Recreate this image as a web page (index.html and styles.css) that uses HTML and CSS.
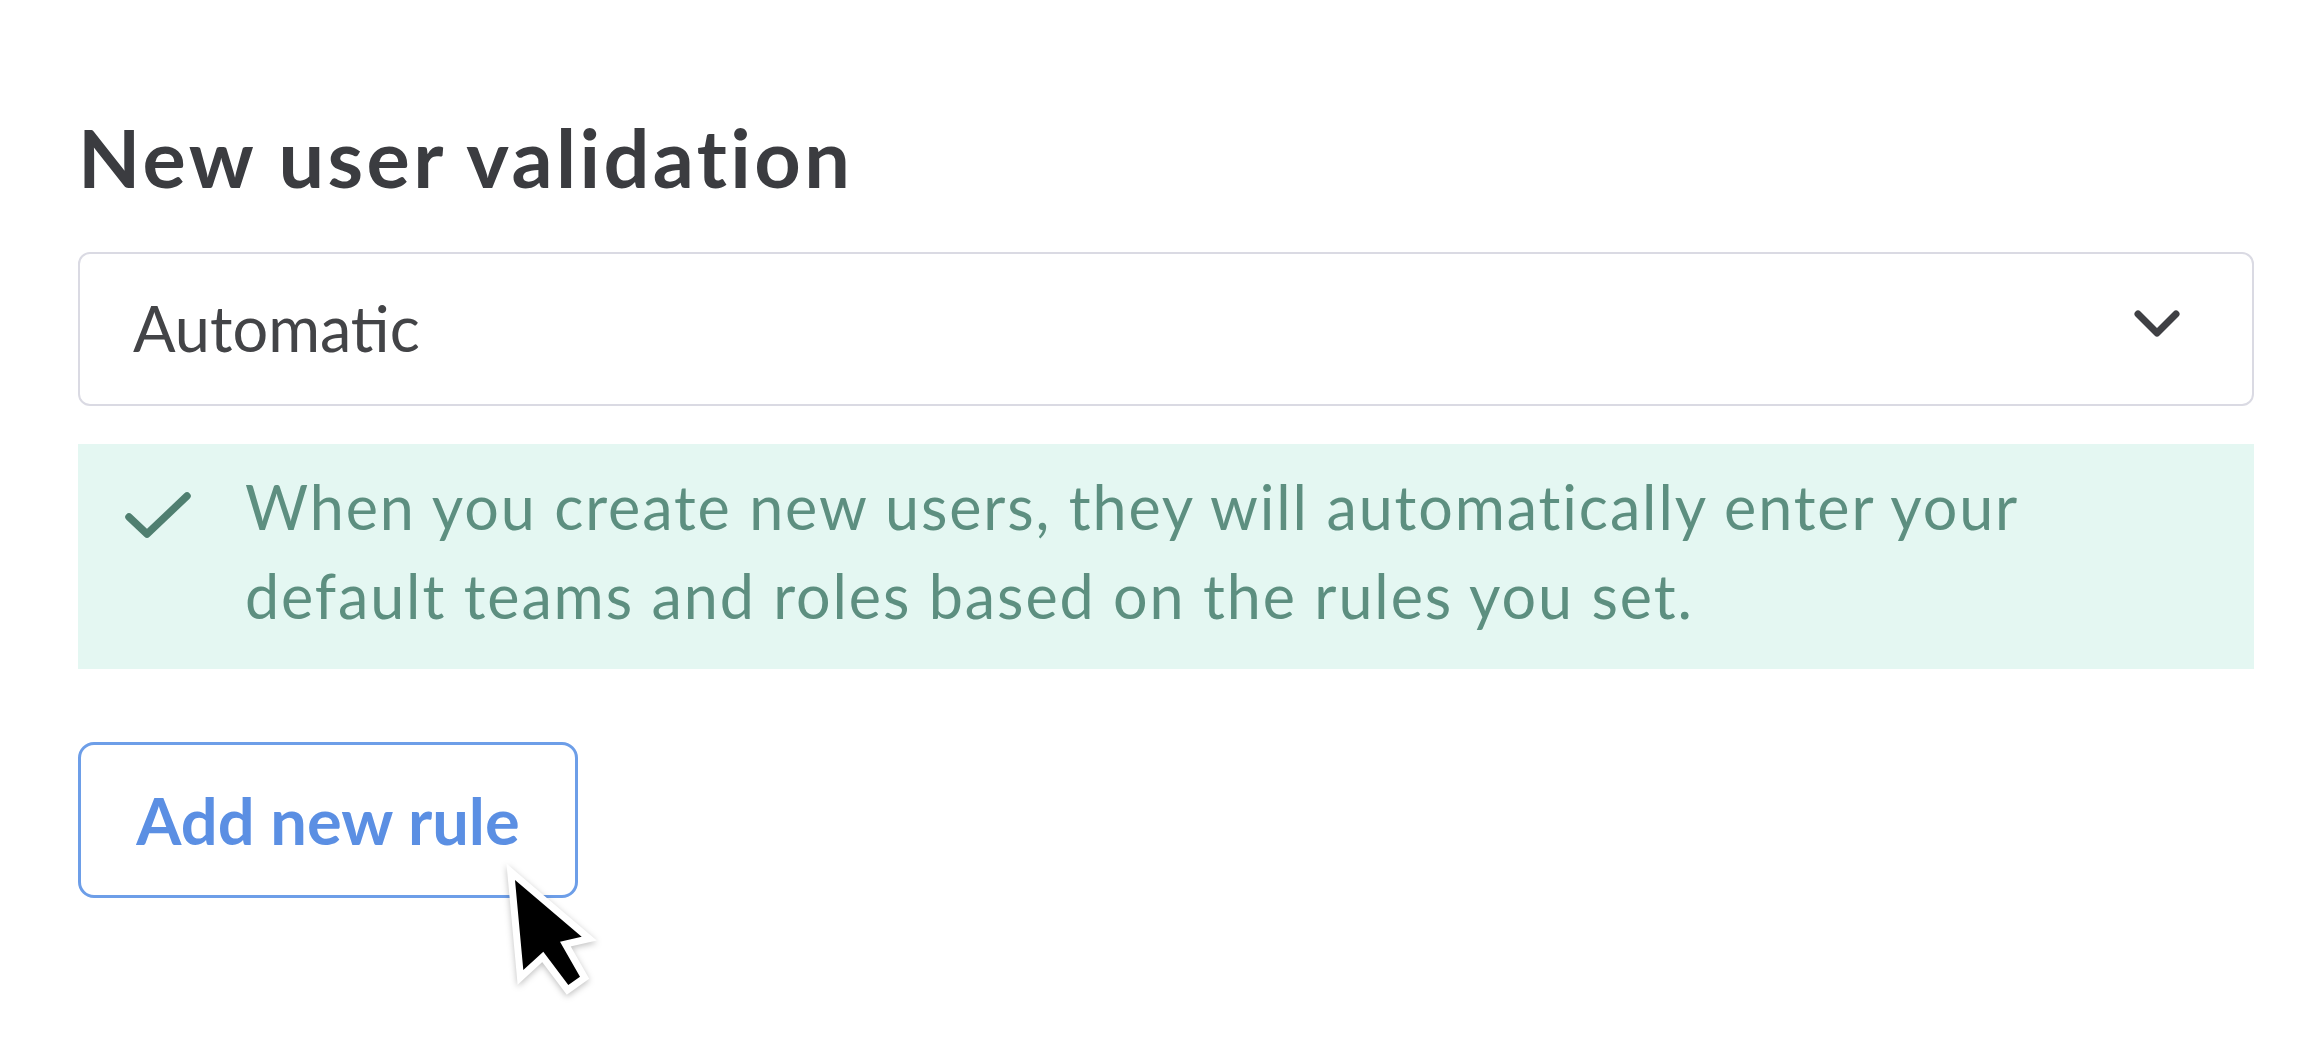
FILE: index.html
```html
<!DOCTYPE html>
<html lang="en">
<head>
  <meta charset="UTF-8">
  <title>New user validation</title>
  <link rel="stylesheet" href="styles.css">
</head>
<body>
  <div class="panel">
    <h1>New user validation</h1>

    <div class="select">
      <span class="select-value">Automatic</span>
      <svg class="chevron" width="46" height="28" viewBox="0 0 46 28">
        <polyline points="4,4 23,23 42,4" fill="none" stroke="#3f4044" stroke-width="7" stroke-linecap="round" stroke-linejoin="round"/>
      </svg>
    </div>

    <div class="notice">
      <svg class="check" width="66" height="48" viewBox="0 0 66 48">
        <polyline points="4,26 22,43 62,5" fill="none" stroke="#4f7f70" stroke-width="7.5" stroke-linecap="round" stroke-linejoin="round"/>
      </svg>
      <p>When you create new users, they will automatically enter your default teams and roles based on the rules you set.</p>
    </div>

    <div class="actions">
      <button class="btn-outline">Add new rule</button>
      <svg class="cursor" width="120" height="160" viewBox="0 0 120 160">
        <polygon points="25,30 91.7,86.7 70,91.7 90,126.7 78.3,135 53.3,101.7 33.3,120" fill="none" stroke="#fff" stroke-width="14" stroke-linejoin="miter"/>
        <polygon points="25,30 91.7,86.7 70,91.7 90,126.7 78.3,135 53.3,101.7 33.3,120" fill="#000"/>
      </svg>
    </div>
  </div>
</body>
</html>
```

FILE: styles.css
```css
body {
  margin: 0;
  background: #fff;
  font-family: 'Lato', 'Open Sans', sans-serif;
}

.panel {
  width: 2176px;
  padding-left: 78px;
}

h1 {
  margin: 116px 0 55px;
  font-size: 81px;
  line-height: 1;
  font-weight: 700;
  letter-spacing: 3.4px;
  color: #3b3c40;
}

.select {
  box-sizing: border-box;
  height: 154px;
  display: flex;
  align-items: center;
  justify-content: space-between;
  padding: 0 72px 0 53px;
  border: 2px solid #dadae3;
  border-radius: 12px;
  background: #fff;
}

.select-value {
  font-size: 63px;
  color: #434447;
  margin-top: -4px;
}

.chevron {
  display: block;
  margin-top: -10px;
}

.notice {
  box-sizing: border-box;
  margin-top: 38px;
  height: 225px;
  display: flex;
  align-items: flex-start;
  padding: 18px 40px 0 47px;
  background: #e4f7f2;
}

.check {
  flex: none;
  margin-top: 29px;
}

.notice p {
  margin: 0 0 0 54px;
  font-size: 61px;
  line-height: 89px;
  letter-spacing: 1.9px;
  color: #5d8f80;
  max-width: 1900px;
}

.actions {
  position: relative;
  margin-top: 73px;
  height: 300px;
}

.btn-outline {
  box-sizing: border-box;
  width: 500px;
  height: 156px;
  background: #fff;
  border: 3px solid #6d9ee8;
  border-radius: 16px;
  font-family: 'Lato', 'Open Sans', sans-serif;
  font-size: 65px;
  font-weight: 700;
  color: #5b8fe3;
  cursor: pointer;
}

.cursor {
  position: absolute;
  left: 412px;
  top: 108px;
  z-index: 2;
  filter: drop-shadow(0 2px 3px rgba(0,0,0,0.25));
}
```
